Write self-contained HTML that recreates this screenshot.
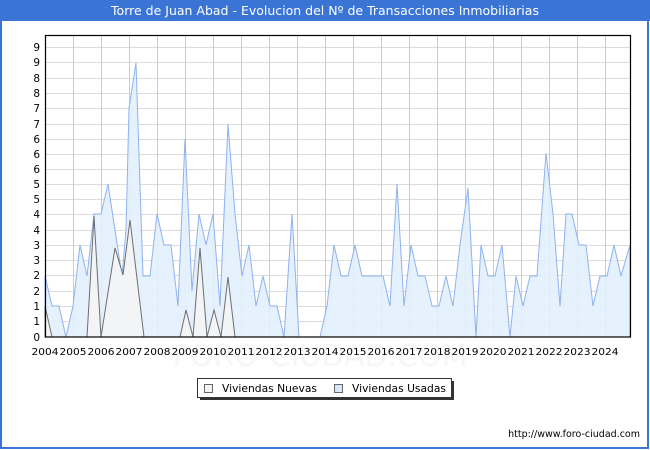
<!DOCTYPE html>
<html><head><meta charset="utf-8"><style>
body{margin:0;background:#fff;}
svg{display:block;font-family:"DejaVu Sans","Liberation Sans",sans-serif;}
</style></head><body>
<svg width="650" height="450" viewBox="0 0 650 450" xmlns="http://www.w3.org/2000/svg">
<rect x="0" y="0" width="650" height="450" fill="#fff"/>
<rect x="1" y="1" width="647" height="447" fill="none" stroke="#3a75d6" stroke-width="2"/>
<rect x="0" y="0" width="650" height="21" fill="#3a75d6"/>
<text x="325" y="15" text-anchor="middle" font-size="12.5" fill="#fff">Torre de Juan Abad - Evolucion del Nº de Transacciones Inmobiliarias</text>
<text x="320" y="366" text-anchor="middle" font-size="30" fill="#f6f6f8">FORO-CIUDAD.COM</text>
<g stroke="#dcdcdc" stroke-width="1">
<line x1="45" x2="630" y1="47.5" y2="47.5"/><line x1="45" x2="630" y1="62.5" y2="62.5"/><line x1="45" x2="630" y1="78.5" y2="78.5"/><line x1="45" x2="630" y1="93.5" y2="93.5"/><line x1="45" x2="630" y1="108.5" y2="108.5"/><line x1="45" x2="630" y1="124.5" y2="124.5"/><line x1="45" x2="630" y1="139.5" y2="139.5"/><line x1="45" x2="630" y1="154.5" y2="154.5"/><line x1="45" x2="630" y1="169.5" y2="169.5"/><line x1="45" x2="630" y1="184.5" y2="184.5"/><line x1="45" x2="630" y1="199.5" y2="199.5"/><line x1="45" x2="630" y1="214.5" y2="214.5"/><line x1="45" x2="630" y1="230.5" y2="230.5"/><line x1="45" x2="630" y1="245.5" y2="245.5"/><line x1="45" x2="630" y1="260.5" y2="260.5"/><line x1="45" x2="630" y1="275.5" y2="275.5"/><line x1="45" x2="630" y1="291.5" y2="291.5"/><line x1="45" x2="630" y1="306.5" y2="306.5"/><line x1="45" x2="630" y1="321.5" y2="321.5"/>
</g>
<g stroke="#cccccc" stroke-width="1">
<line x1="73.5" x2="73.5" y1="36" y2="337"/><line x1="101.5" x2="101.5" y1="36" y2="337"/><line x1="129.5" x2="129.5" y1="36" y2="337"/><line x1="157.5" x2="157.5" y1="36" y2="337"/><line x1="185.5" x2="185.5" y1="36" y2="337"/><line x1="213.5" x2="213.5" y1="36" y2="337"/><line x1="241.5" x2="241.5" y1="36" y2="337"/><line x1="269.5" x2="269.5" y1="36" y2="337"/><line x1="297.5" x2="297.5" y1="36" y2="337"/><line x1="325.5" x2="325.5" y1="36" y2="337"/><line x1="353.5" x2="353.5" y1="36" y2="337"/><line x1="381.5" x2="381.5" y1="36" y2="337"/><line x1="409.5" x2="409.5" y1="36" y2="337"/><line x1="437.5" x2="437.5" y1="36" y2="337"/><line x1="465.5" x2="465.5" y1="36" y2="337"/><line x1="493.5" x2="493.5" y1="36" y2="337"/><line x1="521.5" x2="521.5" y1="36" y2="337"/><line x1="549.5" x2="549.5" y1="36" y2="337"/><line x1="577.5" x2="577.5" y1="36" y2="337"/><line x1="605.5" x2="605.5" y1="36" y2="337"/>
</g>
<polygon fill="#e2effd" fill-opacity="0.9" stroke="#8fb2ef" stroke-width="1" points="45,337 45,276 52,306 59,306 66,337 73,306 80,245 87,276 94,214 101,214 108,184 115,230 122,276 126,230 129,108 136,63 143,276 150,276 157,214 164,245 171,245 178,306 185,139 192,291 199,214 206,245 213,214 220,306 228,124 235,214 242,276 249,245 256,306 263,276 270,306 277,306 284,337 292,214 299,337 320,337 327,306 334,245 341,276 348,276 355,245 362,276 369,276 376,276 383,276 390,306 397,184 404,306 411,245 418,276 425,276 432,306 439,306 446,276 453,306 460,245 468,188 476,337 481,245 488,276 495,276 502,245 510,337 516,276 523,306 530,276 537,276 546,153 553,214 560,306 566,214 572,214 579,245 586,245 593,306 600,276 607,276 614,245 621,276 630,245 630,337"/>
<polygon fill="#f4f4f4" fill-opacity="0.9" stroke="#6e6e6e" stroke-width="1" points="45,337 45,306 52,337 87,337 94,216 101,337 115,248 123,275 130,220 144,337 180,337 186,310 193,337 200,248 207,337 214,310 221,337 228,277 235,337"/>
<rect x="45.5" y="35.5" width="585" height="301.5" fill="none" stroke="#000" stroke-width="1.2"/>
<g font-size="10.5" fill="#000" text-anchor="end">
<text x="40" y="51">9</text><text x="40" y="66">9</text><text x="40" y="82">8</text><text x="40" y="97">8</text><text x="40" y="112">7</text><text x="40" y="128">7</text><text x="40" y="143">6</text><text x="40" y="158">6</text><text x="40" y="173">6</text><text x="40" y="188">5</text><text x="40" y="203">5</text><text x="40" y="218">4</text><text x="40" y="234">4</text><text x="40" y="249">3</text><text x="40" y="264">3</text><text x="40" y="279">2</text><text x="40" y="295">2</text><text x="40" y="310">1</text><text x="40" y="325">1</text><text x="40" y="341">0</text>
</g>
<g font-size="10" fill="#000" text-anchor="middle" textLength="27">
<text x="45" y="355" textLength="27" lengthAdjust="spacingAndGlyphs">2004</text><text x="73" y="355" textLength="27" lengthAdjust="spacingAndGlyphs">2005</text><text x="101" y="355" textLength="27" lengthAdjust="spacingAndGlyphs">2006</text><text x="129" y="355" textLength="27" lengthAdjust="spacingAndGlyphs">2007</text><text x="157" y="355" textLength="27" lengthAdjust="spacingAndGlyphs">2008</text><text x="185" y="355" textLength="27" lengthAdjust="spacingAndGlyphs">2009</text><text x="213" y="355" textLength="27" lengthAdjust="spacingAndGlyphs">2010</text><text x="241" y="355" textLength="27" lengthAdjust="spacingAndGlyphs">2011</text><text x="269" y="355" textLength="27" lengthAdjust="spacingAndGlyphs">2012</text><text x="297" y="355" textLength="27" lengthAdjust="spacingAndGlyphs">2013</text><text x="325" y="355" textLength="27" lengthAdjust="spacingAndGlyphs">2014</text><text x="353" y="355" textLength="27" lengthAdjust="spacingAndGlyphs">2015</text><text x="381" y="355" textLength="27" lengthAdjust="spacingAndGlyphs">2016</text><text x="409" y="355" textLength="27" lengthAdjust="spacingAndGlyphs">2017</text><text x="437" y="355" textLength="27" lengthAdjust="spacingAndGlyphs">2018</text><text x="465" y="355" textLength="27" lengthAdjust="spacingAndGlyphs">2019</text><text x="493" y="355" textLength="27" lengthAdjust="spacingAndGlyphs">2020</text><text x="521" y="355" textLength="27" lengthAdjust="spacingAndGlyphs">2021</text><text x="549" y="355" textLength="27" lengthAdjust="spacingAndGlyphs">2022</text><text x="577" y="355" textLength="27" lengthAdjust="spacingAndGlyphs">2023</text><text x="605" y="355" textLength="27" lengthAdjust="spacingAndGlyphs">2024</text>
</g>
<rect x="200" y="381" width="254" height="19" fill="#333"/>
<rect x="197.5" y="378.5" width="254" height="19" fill="#fff" stroke="#333"/>
<rect x="204.5" y="384.5" width="8" height="8" fill="#f4f4f4" stroke="#666"/>
<text x="222" y="392" font-size="11" textLength="95" lengthAdjust="spacingAndGlyphs">Viviendas Nuevas</text>
<rect x="334.5" y="384.5" width="8" height="8" fill="#d8e8fb" stroke="#666"/>
<text x="352" y="392" font-size="11" textLength="94" lengthAdjust="spacingAndGlyphs">Viviendas Usadas</text>
<text x="640" y="437" font-size="9.5" text-anchor="end">http://www.foro-ciudad.com</text>
</svg>
</body></html>
